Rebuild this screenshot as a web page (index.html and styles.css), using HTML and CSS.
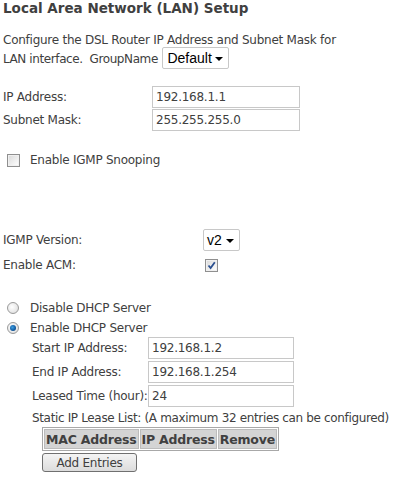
FILE: index.html
```html
<!DOCTYPE html>
<html>
<head>
<meta charset="utf-8">
<title>LAN Setup</title>
<link rel="stylesheet" href="styles.css">
</head>
<body>
<div class="page">
  <h1 class="title">Local Area Network (LAN) Setup</h1>
  <p class="intro">Configure the DSL Router IP Address and Subnet Mask for<br><span class="tight">LAN interface.&nbsp; GroupName</span> <span class="select sel-group">Default<span class="arrow"></span></span></p>

  <div class="form-grid ip-grid">
    <span class="label">IP Address:</span><span class="input">192.168.1.1</span>
    <span class="label">Subnet Mask:</span><span class="input">255.255.255.0</span>
  </div>

  <div class="check-row snoop"><span class="checkbox"></span><span>Enable IGMP Snooping</span></div>

  <div class="form-grid igmp-grid">
    <span class="label">IGMP Version:</span><span><span class="select sel-ver">v2<span class="arrow"></span></span></span>
    <span class="label">Enable ACM:</span><span class="acm-cell"><span class="checkbox checked"><svg viewBox="0 0 9 9" width="9" height="9"><path d="M1.5 4.5 L3.6 7 L7.8 1.2" fill="none" stroke="#2a4f8f" stroke-width="1.8"/></svg></span></span>
  </div>

  <div class="radio-row first"><span class="radio"></span><span>Disable DHCP Server</span></div>
  <div class="radio-row"><span class="radio on"></span><span>Enable DHCP Server</span></div>

  <div class="dhcp">
    <div class="form-grid dhcp-grid">
      <span class="label">Start IP Address:</span><span class="input">192.168.1.2</span>
      <span class="label">End IP Address:</span><span class="input">192.168.1.254</span>
      <span class="label">Leased Time (hour):</span><span class="input">24</span>
    </div>
    <div class="lease-note">Static IP Lease List: (A maximum 32 entries can be configured)</div>
    <div class="lease-block">
      <table class="lease-table">
        <tr><th>MAC Address</th><th>IP Address</th><th>Remove</th></tr>
      </table>
      <span class="button">Add Entries</span>
    </div>
  </div>
</div>
</body>
</html>
```

FILE: styles.css
```css
html, body {
  margin: 0;
  padding: 0;
  background: #ffffff;
}
body {
  font-family: "DejaVu Sans", Tahoma, sans-serif;
  font-size: 12px;
  letter-spacing: -0.25px;
  color: #404040;
}
.page {
  padding: 0 3px;
}
.title {
  font-size: 13.5px;
  font-weight: bold;
  letter-spacing: 0;
  margin: 0;
  padding-top: 0;
  line-height: 16px;
}
.intro {
  margin: 15px 0 0 0;
  line-height: 19px;
  white-space: nowrap;
}
.tight {
  letter-spacing: -0.4px;
}
.select {
  display: inline-flex;
  align-items: center;
  box-sizing: border-box;
  height: 22px;
  border: 1px solid #c8c8c8;
  border-radius: 2px;
  background: #fff;
  font-family: "Liberation Sans", Arial, sans-serif;
  font-size: 14px;
  letter-spacing: 0;
  color: #000;
  padding: 0 0 0 4px;
  vertical-align: middle;
  position: relative;
}
.sel-group { width: 67px; margin-top: -3px; margin-left: 1px; }
.sel-ver { width: 37px; padding-left: 3px; }
.arrow {
  position: absolute;
  right: 5px;
  top: 9px;
  width: 0;
  height: 0;
  border-left: 4px solid transparent;
  border-right: 4px solid transparent;
  border-top: 4px solid #000;
}
.form-grid {
  display: grid;
  align-items: center;
  white-space: nowrap;
}
.ip-grid {
  grid-template-columns: 149px 148px;
  row-gap: 1px;
  margin-top: 17px;
}
.input {
  box-sizing: border-box;
  height: 22px;
  border: 1px solid #c8c8c8;
  background: #fff;
  display: flex;
  align-items: center;
  padding-left: 3px;
  color: #404040;
}
.check-row, .radio-row {
  display: flex;
  align-items: center;
  gap: 10px;
  white-space: nowrap;
}
.check-row {
  margin-top: 20px;
  padding-left: 4px;
  height: 18px;
}
.checkbox {
  box-sizing: border-box;
  width: 13px;
  height: 13px;
  border: 1px solid #8f8f8f;
  background: linear-gradient(135deg, #d8d8d8 0%, #f4f4f4 70%, #ffffff 100%);
  box-shadow: inset 0 0 0 1px #f0f0f0;
  display: inline-flex;
  align-items: center;
  justify-content: center;
}
.igmp-grid {
  grid-template-columns: 200px 60px;
  margin-top: 60px;
  row-gap: 3px;
}
.igmp-grid .label {
  height: 22px;
  display: flex;
  align-items: center;
}
.acm-cell {
  padding-left: 2px;
  display: flex;
  align-items: center;
  height: 22px;
}
.radio-row {
  height: 20px;
  padding-left: 4px;
}
.radio-row.first {
  margin-top: 22px;
}
.radio {
  box-sizing: border-box;
  width: 12px;
  height: 12px;
  border-radius: 50%;
  border: 1px solid #9a9a9a;
  background: radial-gradient(circle at 40% 40%, #ffffff 0%, #e8e8e8 60%, #d0d0d0 100%);
  position: relative;
  margin-right: 1px;
}
.radio.on::after {
  content: "";
  position: absolute;
  left: 2px;
  top: 2px;
  width: 6px;
  height: 6px;
  border-radius: 50%;
  background: radial-gradient(circle at 40% 40%, #3fa0e0 0%, #1460a8 55%, #0a2f5a 100%);
}
.dhcp {
  padding-left: 29px;
}
.dhcp-grid {
  grid-template-columns: 116px 146px;
  row-gap: 2px;
  margin-top: -1px;
}
.lease-note {
  margin-top: 2px;
  line-height: 18px;
  white-space: nowrap;
  letter-spacing: -0.35px;
}
.lease-block {
  padding-left: 10px;
}
.lease-table {
  border: 1px solid #a8a8a8;
  border-spacing: 1px;
  background: #fff;
  font-weight: bold;
  font-size: 12.5px;
  letter-spacing: -0.2px;
  color: #404040;
}
.lease-table th {
  background: #d4d4d4;
  border: 1px solid #bcbcbc;
  padding: 1px 1px;
  height: 16px;
  font-weight: bold;
  text-align: left;
  white-space: nowrap;
}
.button {
  display: inline-flex;
  align-items: center;
  justify-content: center;
  box-sizing: border-box;
  width: 95px;
  height: 19px;
  margin-top: 2px;
  border: 1px solid #707070;
  border-radius: 3px;
  background: linear-gradient(#f4f4f4, #dcdcdc);
  font-size: 12px;
  color: #404040;
}
```
